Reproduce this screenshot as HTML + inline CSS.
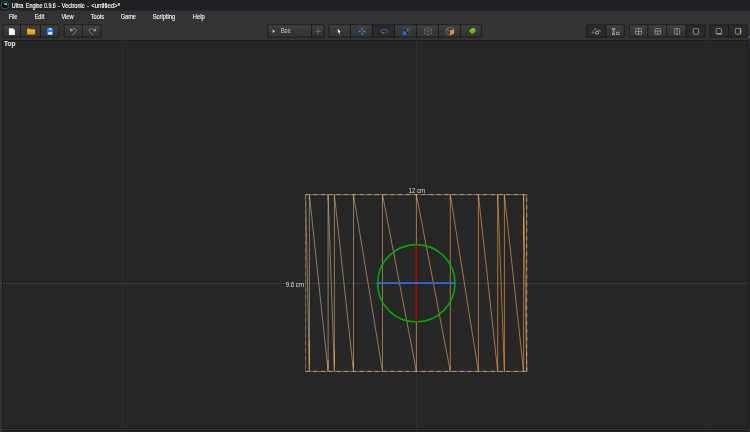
<!DOCTYPE html>
<html>
<head>
<meta charset="utf-8">
<title>Ultra Engine 0.9.6 - Vectronic - &lt;untitled&gt;*</title>
<style>
html,body{margin:0;padding:0;}
body{width:750px;height:432px;overflow:hidden;background:#333333;position:relative;font-family:"Liberation Sans",sans-serif;}
#ui{position:absolute;left:0;top:0;width:750px;height:432px;display:block;}
text{font-family:"Liberation Sans",sans-serif;}
.lbl{fill:#dedede;}
.mi{font-size:6.1px;fill:#f0f0f0;}
</style>
</head>
<body>
<svg id="ui" viewBox="0 0 750 432" width="750" height="432">
  <defs>
    <linearGradient id="wg" gradientUnits="userSpaceOnUse" x1="305" y1="0" x2="527" y2="0">
      <stop offset="0" stop-color="#d2b492"/><stop offset="0.28" stop-color="#dab07c"/><stop offset="0.5" stop-color="#f0ae64"/><stop offset="1" stop-color="#ffaa44"/>
    </linearGradient>
    <filter id="soft" x="-5%" y="-30%" width="110%" height="160%"><feGaussianBlur stdDeviation="0.22"/></filter>
    <linearGradient id="bg" x1="0" y1="0" x2="0" y2="1">
      <stop offset="0" stop-color="#404040"/><stop offset="0.45" stop-color="#383838"/><stop offset="1" stop-color="#313131"/>
    </linearGradient>
  </defs>
  <rect x="0" y="0" width="750" height="432" fill="#333333"/>
  <rect x="0" y="0" width="750" height="10.500" fill="#202022"/>
  <g id="title" filter="url(#soft)" stroke="#f4f4f4" stroke-width="0.180">
    <text x="11.8" y="7.9" font-size="6.3" fill="#f4f4f4" textLength="11.6" lengthAdjust="spacingAndGlyphs">Ultra</text>
    <text x="25.8" y="7.9" font-size="6.3" fill="#f4f4f4" textLength="16.8" lengthAdjust="spacingAndGlyphs">Engine</text>
    <text x="44" y="7.9" font-size="6.3" fill="#f4f4f4" textLength="11.8" lengthAdjust="spacingAndGlyphs">0.9.6</text>
    <text x="58" y="7.9" font-size="6.3" fill="#f4f4f4" textLength="1.8" lengthAdjust="spacingAndGlyphs">-</text>
    <text x="61.8" y="7.9" font-size="6.3" fill="#f4f4f4" textLength="22.7" lengthAdjust="spacingAndGlyphs">Vectronic</text>
    <text x="87.2" y="7.9" font-size="6.3" fill="#f4f4f4" textLength="1.6" lengthAdjust="spacingAndGlyphs">-</text>
    <text x="91.2" y="7.9" font-size="6.3" fill="#f4f4f4" textLength="28.8" lengthAdjust="spacingAndGlyphs">&lt;untitled&gt;*</text>
  </g>
  <g id="menu" filter="url(#soft)" stroke="#f0f0f0" stroke-width="0.150">
    <text x="9" y="18.8" font-size="6.3" fill="#f0f0f0" textLength="8.3" lengthAdjust="spacingAndGlyphs">File</text>
    <text x="34.7" y="18.8" font-size="6.3" fill="#f0f0f0" textLength="9.5" lengthAdjust="spacingAndGlyphs">Edit</text>
    <text x="61.4" y="18.8" font-size="6.3" fill="#f0f0f0" textLength="12.2" lengthAdjust="spacingAndGlyphs">View</text>
    <text x="90.7" y="18.8" font-size="6.3" fill="#f0f0f0" textLength="13.3" lengthAdjust="spacingAndGlyphs">Tools</text>
    <text x="120.7" y="18.8" font-size="6.3" fill="#f0f0f0" textLength="15.3" lengthAdjust="spacingAndGlyphs">Game</text>
    <text x="152.7" y="18.8" font-size="6.3" fill="#f0f0f0" textLength="22.6" lengthAdjust="spacingAndGlyphs">Scripting</text>
    <text x="192.7" y="18.8" font-size="6.3" fill="#f0f0f0" textLength="12.0" lengthAdjust="spacingAndGlyphs">Help</text>
  </g>
  <rect x="2.50" y="24.4" width="56.80" height="13.20" rx="1.5" fill="#171717"/>
  <rect x="3.35" y="25.25" width="16.72" height="11.50" rx="1" fill="url(#bg)"/>
  <rect x="20.93" y="25.25" width="19.15" height="11.50" rx="1" fill="url(#bg)"/>
  <rect x="40.92" y="25.25" width="17.52" height="11.50" rx="1" fill="url(#bg)"/>
  <rect x="63.70" y="24.4" width="37.70" height="13.20" rx="1.5" fill="#171717"/>
  <rect x="64.55" y="25.25" width="17.53" height="11.50" rx="1" fill="url(#bg)"/>
  <rect x="82.92" y="25.25" width="17.63" height="11.50" rx="1" fill="url(#bg)"/>
  <rect x="267.30" y="24.4" width="57.30" height="13.20" rx="1.5" fill="#171717"/>
  <rect x="268.15" y="25.25" width="42.92" height="11.50" rx="1" fill="url(#bg)"/>
  <rect x="311.93" y="25.25" width="11.82" height="11.50" rx="1" fill="url(#bg)"/>
  <rect x="328.60" y="24.4" width="153.10" height="13.20" rx="1.5" fill="#171717"/>
  <rect x="329.45" y="25.25" width="20.52" height="11.50" rx="1" fill="url(#bg)"/>
  <rect x="350.82" y="25.25" width="21.15" height="11.50" rx="1" fill="url(#bg)"/>
  <rect x="372.82" y="25.25" width="21.25" height="11.50" rx="1" fill="#2a2a2a"/>
  <rect x="394.93" y="25.25" width="21.05" height="11.50" rx="1" fill="url(#bg)"/>
  <rect x="416.82" y="25.25" width="21.15" height="11.50" rx="1" fill="url(#bg)"/>
  <rect x="438.82" y="25.25" width="21.05" height="11.50" rx="1" fill="url(#bg)"/>
  <rect x="460.73" y="25.25" width="20.12" height="11.50" rx="1" fill="url(#bg)"/>
  <rect x="586.20" y="24.4" width="38.40" height="13.20" rx="1.5" fill="#171717"/>
  <rect x="587.05" y="25.25" width="18.52" height="11.50" rx="1" fill="#2a2a2a"/>
  <rect x="606.42" y="25.25" width="17.33" height="11.50" rx="1" fill="url(#bg)"/>
  <rect x="628.80" y="24.4" width="76.70" height="13.20" rx="1.5" fill="#171717"/>
  <rect x="629.65" y="25.25" width="17.73" height="11.50" rx="1" fill="url(#bg)"/>
  <rect x="648.22" y="25.25" width="18.05" height="11.50" rx="1" fill="url(#bg)"/>
  <rect x="667.12" y="25.25" width="18.45" height="11.50" rx="1" fill="url(#bg)"/>
  <rect x="686.42" y="25.25" width="18.23" height="11.50" rx="1" fill="#2a2a2a"/>
  <rect x="709.40" y="24.4" width="38.20" height="13.20" rx="1.5" fill="#171717"/>
  <rect x="710.25" y="25.25" width="17.83" height="11.50" rx="1" fill="#2a2a2a"/>
  <rect x="728.92" y="25.25" width="17.83" height="11.50" rx="1" fill="#2a2a2a"/>
  <!-- viewport -->
  <rect x="2.400" y="40.400" width="745.600" height="388" fill="#262626" stroke="#181818" stroke-width="0.800"/>
  <rect x="3" y="430.600" width="744.400" height="3" fill="#262626" stroke="#181818" stroke-width="0.800"/>
  <rect x="749.400" y="41.200" width="1" height="392" fill="#1c1c1c"/>
  <g stroke="#2c2c2c" stroke-width="0.900">
    <line x1="122.500" y1="41" x2="122.500" y2="428"/>
    <line x1="416.400" y1="41" x2="416.400" y2="428" stroke="#323232"/>
    <line x1="710.400" y1="41" x2="710.400" y2="428"/>
  </g>
  <line x1="3" y1="283.500" x2="747.500" y2="283.500" stroke="#3a3a3a" stroke-width="0.900"/>
  <text filter="url(#soft)" stroke="#dedede" stroke-width="0.150" x="4" y="46.400" font-size="6.500" font-weight="bold" class="lbl" textLength="11.400" lengthAdjust="spacingAndGlyphs">Top</text>
  <g stroke="url(#wg)" stroke-width="0.6" fill="none">
  <path d="M309.4 194.6V371.4M328.1 194.6V371.4M334.4 194.6V371.4M353.5 194.6V371.4M382.5 194.6V371.4M416.4 194.6V371.4M450.3 194.6V371.4M478.4 194.6V371.4M497.7 194.6V371.4M504.4 194.6V371.4M523.6 194.6V371.4"/>
  <path d="M305.6 194.6L309.4 371.4M309.4 194.6L328.1 371.4M328.1 194.6L334.4 371.4M334.4 194.6L353.5 371.4M353.5 194.6L382.5 371.4M382.5 194.6L416.4 371.4M416.4 194.6L450.3 371.4M450.3 194.6L478.4 371.4M478.4 194.6L497.7 371.4M497.7 194.6L504.4 371.4M504.4 194.6L523.6 371.4M523.6 194.6L526.7 371.4"/>
  </g>
  <g stroke="#f2a448" stroke-width="0.75" fill="none">
  <path d="M309.4 341V365M334.4 351V365M328.1 360V368M353.5 362V368M523.6 217.4V240.4"/>
  </g>
  <g stroke="#c89c68" stroke-width="0.7" fill="none">
  <path d="M309.4 194.6V200.6M328.1 194.6V200.6M334.4 194.6V200.6M353.5 194.6V200.6M382.5 194.6V200.6M416.4 194.6V200.6M450.3 194.6V200.6M478.4 194.6V200.6M497.7 194.6V200.6M504.4 194.6V200.6M523.6 194.6V200.6"/>
  </g>
  <g stroke="#b87c34" stroke-width="0.75" fill="none">
  <path d="M309.4 365V371.4M334.4 365V371.4M328.1 368V371.4M353.5 368V371.4M382.5 366V371.4M416.4 366V371.4M450.3 366V371.4M478.4 366V371.4M497.7 364V371.4M504.4 358V371.4M523.6 240.4V250"/>
  </g>
  <path d="M305.6 194.6V371.4" fill="none" stroke="#8a6434" stroke-width="0.7"/>
  <path d="M305.6 194.6V371.4" fill="none" stroke="#80858c" stroke-width="0.7" stroke-dasharray="3.86 3.86"/>
  <path d="M305.6 194.6H526.7M526.7 371.4V194.6M305.6 371.4H526.7" fill="none" stroke="#b8803c" stroke-width="0.7" stroke-linecap="square"/>
  <path d="M305.6 194.6H526.7M526.7 371.4V194.6M305.6 371.4H526.7" fill="none" stroke="#b4b8bc" stroke-width="0.7" stroke-dasharray="3.86 3.86"/>
  <text filter="url(#soft)" x="408.6" y="192.6" font-size="6.3" textLength="16.3" lengthAdjust="spacingAndGlyphs" class="lbl">12 cm</text>
  <text filter="url(#soft)" x="285.7" y="286.5" font-size="6.3" textLength="18.3" lengthAdjust="spacingAndGlyphs" class="lbl">9.6 cm</text>
  <circle cx="416.3" cy="283.3" r="38.7" fill="none" stroke="#0aa00a" stroke-width="1.7"/>
  <line x1="416.4" y1="244.6" x2="416.4" y2="322" stroke="#aa0202" stroke-width="1.6"/>
  <line x1="377.6" y1="283.2" x2="455" y2="283.2" stroke="#2a70dc" stroke-width="1.7"/>
  <!-- app icon -->
  <circle cx="5" cy="5.200" r="3.650" fill="#040404" stroke="#1a7486" stroke-width="0.900"/>
  <path d="M3.300 3.700L6.700 3.200L7.500 6L6.500 4.700L4.300 4.500Z" fill="#e6e6e6"/>
  <!-- new -->
  <path d="M8.9 28.2h4.2l1.8 1.8v5.1h-6z" fill="#f6f6f6"/>
  <!-- open -->
  <path d="M27.1 28.4h3l.8.9h4.2v5.300h-8z" fill="#e5a51c"/>
  <path d="M27.1 30.500h8v.700h-8z" fill="#f6cc52"/>
  <!-- save -->
  <path d="M46.9 28.2h5.300l.9.900v6h-6.200z" fill="#2f7af0"/>
  <rect x="48.700" y="28.2" width="2.900" height="1.500" fill="#e4ecfb"/>
  <rect x="48.300" y="32.100" width="3.800" height="2.400" fill="#f0f4ff"/>
  <!-- undo -->
  <path d="M72.300 34.700C74.500 33.300 76.300 31.700 76.200 30.300C76 28.300 73.500 28 71.700 30" fill="none" stroke="#a8a8a8" stroke-width="0.650"/>
  <path d="M70 28.100l.2 3.300 3-.7z" fill="#a8a8a8"/>
  <!-- redo -->
  <path d="M92.800 34.700C90.800 33.300 89.200 31.700 89.300 30.300C89.500 28.200 92.300 27.900 94.200 30" fill="none" stroke="#a8a8a8" stroke-width="0.650"/>
  <path d="M96 28.300l-.2 3.200-2.900-.7z" fill="#a8a8a8"/>
  <!-- box dropdown -->
  <path d="M272.600 29.500l2.400 1.750-2.400 1.750z" fill="#d4d4d4"/>
  <text filter="url(#soft)" x="280.900" y="33.300" font-size="6.300" textLength="9.500" lengthAdjust="spacingAndGlyphs" fill="#cfcfcf">Box</text>
  <path d="M318.100 28.600v5.300M315.500 31.250h5.300" stroke="#8c8c8c" stroke-width="0.650" fill="none"/>
  <!-- cursor -->
  <path d="M337.700 28.500l3.300 3.500-1.400.1.900 1.900-.8.400-.9-1.900-1.100 1z" fill="#f2f2f2" stroke="#1a1a1a" stroke-width="0.250"/>
  <!-- move -->
  <g fill="#2e8ae6">
    <path d="M362.100 27.700l1.250 2.100h-2.500z"/><path d="M362.100 35.300l1.250-2.100h-2.500z"/>
    <path d="M358.200 31.500l2.200-1.250v2.500z"/><path d="M366 31.500l-2.200-1.250v2.500z"/>
    <rect x="361.750" y="29.500" width=".7" height="1.200" opacity=".7"/><rect x="361.750" y="32.300" width=".7" height="1.200" opacity=".7"/>
    <rect x="360.100" y="31.150" width="1.200" height=".7" opacity=".7"/><rect x="362.900" y="31.150" width="1.200" height=".7" opacity=".7"/>
  </g>
  <!-- rotate -->
  <path d="M383.600 33A3.600 1.700 0 1 1 385.900 32.780" fill="none" stroke="#2a8ae4" stroke-width="0.800"/>
  <path d="M383.400 32.100l1.700 1.100-1.700 1.100z" fill="#2a8ae4"/>
  <!-- scale -->
  <rect x="403.300" y="28.200" width="6.400" height="6.600" fill="none" stroke="#737a82" stroke-width="0.500" stroke-dasharray="1 0.700"/>
  <rect x="404.200" y="29" width="2.100" height="2.400" fill="#242424"/>
  <rect x="406.600" y="31.800" width="2" height="2" fill="#262626"/>
  <rect x="402.900" y="31.600" width="3.300" height="3.400" fill="#1f74ea"/>
  <rect x="406.600" y="29.400" width="1.700" height="1.800" fill="#2a8af4"/>
  <!-- wire cube -->
  <g transform="translate(428.100 31.300)">
    <path d="M0-3.700l3.450 2v3.700L0 3.700l-3.450-1.700v-3.700zM-3.450-1.700L0 0l3.450-1.700M0 0V3.700" fill="none" stroke="#808080" stroke-width="0.450"/>
    <g fill="#d08630"><circle cx="0" cy="-3.700" r=".48"/><circle cx="3.450" cy="-1.700" r=".48"/><circle cx="-3.450" cy="-1.700" r=".48"/><circle cx="3.450" cy="2" r=".48"/><circle cx="-3.450" cy="2" r=".48"/><circle cx="0" cy="3.700" r=".48"/><circle cx="0" cy="0" r=".48"/></g>
  </g>
  <!-- solid cube -->
  <g transform="translate(450.100 31.400)">
    <path d="M0-.7l4-1.800v4.500L0 4z" fill="#f3921c"/>
    <path d="M0-4.100l4 1.600M0-4.100l-3.900 2v4.200L0 4.100M-3.900-2.100L0-.7V4" fill="none" stroke="#8e8e8e" stroke-width="0.550"/>
  </g>
  <!-- terrain -->
  <path d="M468.700 30.700l3.400 3.100 4-3.100v.9l-4 3z-3.400-3.100z" fill="#7a5020"/>
  <path d="M468.700 30.700l2-1.400 1.200-1.400 1.100.9 1-1 1.100 1.500 1 1.700-4 3.100z" fill="#66bd2a"/>
  <path d="M471.900 28l1.100.8-.6 1.700zM474 27.800l1 1.500-1.300.9z" fill="#8fdc4a"/>
  <!-- shapes -->
  <g fill="none" stroke="#a6a6a6" stroke-width="0.650">
    <path d="M594.800 32.900h-2.900l3.450-4.600 1.100 1.900"/>
    <circle cx="597.150" cy="32.650" r="1.500" stroke="#b4b4b4" stroke-width="0.950"/>
    <path d="M598.300 30.200h1.800v1.900"/>
  </g>
  <!-- hierarchy -->
  <g fill="none" stroke="#b4b4b4" stroke-width="0.650">
    <rect x="612.500" y="28.300" width="2.500" height="1.300"/>
    <path d="M613.200 29.600v3.500M613.200 31.100h2"/>
    <rect x="612.500" y="33.200" width="2.200" height="1.600"/>
    <rect x="616.300" y="32.200" width="2.800" height="2.200"/>
  </g>
  <!-- layouts -->
  <g fill="none" stroke="#9e9e9e" stroke-width="0.800">
    <rect x="635.600" y="28.600" width="6" height="5.700" rx="1"/><path d="M638.600 28.600v5.700M635.600 31.450h6"/>
    <rect x="655.100" y="28.600" width="5.600" height="5.700" rx="1"/><path d="M655.100 31h5.600M657.900 31v3.300"/>
    <rect x="674.300" y="28.600" width="5.400" height="5.700" rx="1"/><path d="M677 28.600v5.700"/>
    <rect x="693.300" y="28.600" width="5.400" height="5.700" rx="1"/>
    <rect x="716.200" y="28.400" width="5.400" height="5.700" rx="1"/><path d="M716.200 33.700h5.400" stroke-width="1.200"/>
    <rect x="735.300" y="28.400" width="5.600" height="5.700" rx="1"/><path d="M740.400 28.400v5.700" stroke-width="1.200"/>
  </g>
  <rect x="748.800" y="35.800" width="1.200" height="2.200" fill="#2a6fd0"/>

</svg>
</body>
</html>
